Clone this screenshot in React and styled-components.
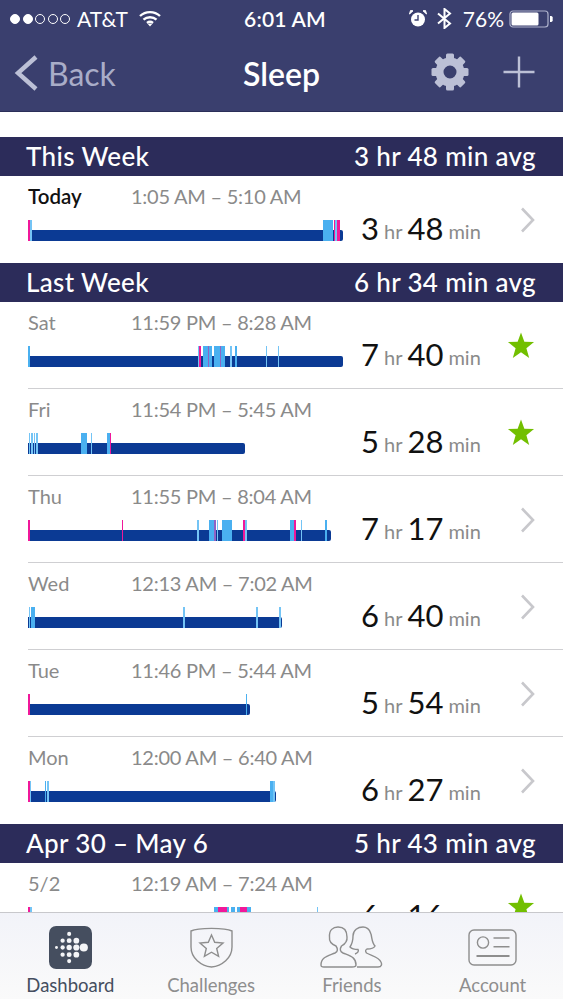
import React from 'react'
import styled, { createGlobalStyle } from 'styled-components'

const BLUE = '#4ab0f0'
const LIGHT = '#74c4f5'
const PINK = '#f0189a'
const PURPLE = '#8f63c4'

const GlobalStyle = createGlobalStyle`
  html, body {
    margin: 0;
    padding: 0;
    overflow: hidden;
    background: #fff;
  }
  * {
    box-sizing: border-box;
  }
`

const Screen = styled.div`
  display: flex;
  flex-direction: column;
  width: 563px;
  height: 999px;
  overflow: hidden;
  font-family: 'Lato', 'Liberation Sans', sans-serif;
`

const Header = styled.header`
  flex: none;
  height: 112px;
  background: #3a3f6e;
  border-bottom: 1px solid #2a2e58;
  color: #fff;
`

const StatusBar = styled.div`
  display: grid;
  grid-template-columns: 1fr auto 1fr;
  align-items: center;
  height: 37px;
  padding: 0 10px;
  font-size: 21px;
`

const StatusLeft = styled.div`
  display: flex;
  align-items: center;
`

const StatusRight = styled.div`
  display: flex;
  align-items: center;
  justify-content: flex-end;
`

const Signal = styled.div`
  display: flex;
  gap: 2.5px;
  margin-right: 7px;
`

const SignalDot = styled.span`
  width: 10px;
  height: 10px;
  border-radius: 50%;
  border: 1px solid #fff;
  background: ${(p) => (p.$on ? '#fff' : 'transparent')};
`

const Carrier = styled.span`
  margin-right: 11px;
`

const Clock = styled.span`
  padding-left: 7px;
  font-weight: 600;
  letter-spacing: 0.2px;
`

const AlarmSlot = styled.span`
  display: flex;
  margin-right: 10px;
`

const Percent = styled.span`
  margin: 0 5px 0 11px;
`

const NavBar = styled.div`
  display: grid;
  grid-template-columns: 1fr auto 1fr;
  align-items: center;
  height: 74px;
  padding: 0 14px 2px;
`

const BackLink = styled.div`
  display: flex;
  align-items: center;
  gap: 10px;
  color: #a9adc8;
  font-size: 32px;
`

const NavTitle = styled.div`
  font-size: 32px;
  font-weight: 600;
`

const NavActions = styled.div`
  display: flex;
  align-items: center;
  justify-content: flex-end;
  gap: 34px;
  padding: 0 14px 3px 0;
`

const Content = styled.main`
  flex: 1;
  min-height: 0;
  overflow: hidden;
  padding-top: 25px;
  background: #fff;
`

const SectionHead = styled.div`
  display: flex;
  align-items: center;
  justify-content: space-between;
  height: 39px;
  padding: 0 27px 1px 26px;
  background: #2c2c5a;
  color: #fff;
  font-size: 26px;
  font-weight: 500;
  letter-spacing: 0.35px;
`

const Row = styled.div`
  display: grid;
  grid-template-columns: 333px 1fr auto;
  height: 87px;
  padding: 0 28px;
  position: relative;
`

const Divider = styled.div`
  height: 1px;
  margin: -1px 0 0 28px;
  background: #cfcfd2;
  position: relative;
`

const RowMain = styled.div`
  display: flex;
  flex-direction: column;
  padding-top: 8px;
`

const RowLabels = styled.div`
  display: flex;
  height: 25px;
  line-height: 25px;
  font-size: 20px;
  letter-spacing: -0.25px;
  color: #8a8a8a;
`

const Day = styled.span`
  width: 103px;
  letter-spacing: 0;
  color: ${(p) => (p.$today ? '#111' : '#8a8a8a')};
  font-weight: ${(p) => (p.$today ? 600 : 400)};
  font-size: ${(p) => (p.$today ? '20.5px' : '20px')};
`

const Chart = styled.div`
  position: relative;
  height: 21px;
  margin-top: 11px;
`

const Bar = styled.div`
  position: absolute;
  left: 0;
  bottom: 0;
  height: 11px;
  background: #0b3a94;
  border-radius: 0 2px 2px 0;
`

const Mark = styled.span`
  position: absolute;
  top: 0;
  bottom: 0;
`

const Total = styled.div`
  padding-top: 32px;
  line-height: 40px;
  font-size: 20px;
  color: #8a8a8a;
  white-space: nowrap;
`

const Num = styled.span`
  font-size: 31px;
  color: #111;
  vertical-align: -1px;
`

const Unit = styled.span`
  margin: 0 5px;
`

const RowEnd = styled.div`
  display: flex;
  justify-content: flex-end;
  padding-top: 30px;
`

const TabBar = styled.nav`
  flex: none;
  display: grid;
  grid-template-columns: repeat(4, 1fr);
  height: 87px;
  border-top: 1px solid #c8c8cc;
  background: linear-gradient(#f2f3f9, #fafafa);
`

const Tab = styled.div`
  display: flex;
  flex-direction: column;
  align-items: center;
  padding-top: 12px;
  color: ${(p) => (p.$active ? '#454e5f' : '#8e8e8e')};
  font-size: 18.5px;
`

const TabIcon = styled.div`
  display: flex;
  align-items: center;
  justify-content: center;
  height: 44px;
  margin-bottom: 5px;
`

const rows = {
  today: [
    [0, 2.3, PINK], [2.3, 4, LIGHT], [294.7, 305.3, BLUE], [305.7, 307.3, PINK],
    [307.3, 309, LIGHT], [309, 312.3, PINK],
  ],
  sat: [
    [0, 1.7, BLUE], [170.3, 172, LIGHT], [171.3, 173.3, PINK], [174.7, 184.3, BLUE],
    [179.7, 181.3, PURPLE], [186.3, 197, BLUE], [191.7, 193, PURPLE], [202, 203.7, LIGHT],
    [207, 209, BLUE], [237.7, 238.7, LIGHT], [250, 250.7, LIGHT],
  ],
  fri: [
    [0.7, 2, LIGHT], [2.7, 3.7, LIGHT], [4.3, 5.3, LIGHT], [6, 7, LIGHT], [8, 10, LIGHT],
    [53.3, 59, BLUE], [62.7, 64, LIGHT], [79, 82, BLUE], [82, 83.3, PINK],
  ],
  thu: [
    [0, 1.5, PINK], [94, 95.3, PINK], [169.3, 171, LIGHT], [180.7, 187, BLUE],
    [186.3, 187.7, PURPLE], [188.7, 190, LIGHT], [193.7, 204.3, BLUE], [215.3, 217, PINK],
    [217, 219, LIGHT], [262.3, 266.3, BLUE], [266.3, 268, PINK], [273.3, 274.3, LIGHT],
    [297.3, 299, BLUE],
  ],
  wed: [
    [0.7, 2, LIGHT], [3, 7, BLUE], [155, 156.7, LIGHT], [228.3, 229.7, LIGHT], [251.3, 253.3, LIGHT],
  ],
  tue: [[0, 2, PINK], [218, 219.3, BLUE]],
  mon: [
    [0, 2, PINK], [2, 3, LIGHT], [17, 18, BLUE], [18.7, 21, LIGHT], [242, 245, BLUE], [245, 246.7, LIGHT],
  ],
  may2: [
    [0, 2, PINK], [2, 4, LIGHT], [186, 190.3, BLUE], [190.3, 198.7, PINK], [198.7, 201, BLUE],
    [202.7, 207, BLUE], [208.7, 212, BLUE], [212, 218.7, PINK], [218.7, 223, BLUE], [289, 290, LIGHT],
  ],
}

const Chevron = () => (
  <svg width="15" height="28" viewBox="0 0 15 28" fill="none" stroke="#c8c8cc" strokeWidth="2.6">
    <path d="M2 2.5 L13 14 L2 25.5" />
  </svg>
)

const Star = () => (
  <svg width="28" height="27" viewBox="0 0 30 29" fill="#72bf00">
    <path d="M15 0.5 L18.6 10.6 L29 10.8 L20.8 17.4 L23.8 28 L15 21.8 L6.2 28 L9.2 17.4 L1 10.8 L11.4 10.6 Z" />
  </svg>
)

const SleepRow = ({ day, today, time, width, marks, hr, min, star }) => (
  <Row>
    <RowMain>
      <RowLabels>
        <Day $today={today}>{day}</Day>
        <span>{time}</span>
      </RowLabels>
      <Chart>
        <Bar style={{ width }} />
        {marks.map(([from, to, color]) => (
          <Mark key={from} style={{ left: from, width: to - from, background: color }} />
        ))}
      </Chart>
    </RowMain>
    <Total>
      <Num>{hr}</Num>
      <Unit>hr</Unit>
      <Num>{min}</Num>
      <Unit>min</Unit>
    </Total>
    <RowEnd>{star ? <Star /> : <Chevron />}</RowEnd>
  </Row>
)

const Wifi = () => (
  <svg width="22" height="17" viewBox="0 0 22 17" fill="none" stroke="#fff" strokeWidth="2.4">
    <path d="M1 6 C6.5 0.8 15.5 0.8 21 6" />
    <path d="M4.5 9.6 C8 6.4 14 6.4 17.5 9.6" />
    <path d="M8 13 C9.8 11.6 12.2 11.6 14 13" />
    <path d="M11 16.5 L8.8 14 C10 13.2 12 13.2 13.2 14 Z" fill="#fff" stroke="none" />
  </svg>
)

const Alarm = () => (
  <svg width="18" height="17" viewBox="0 0 18 17">
    <circle cx="9" cy="9.5" r="7" fill="#fff" />
    <path d="M9 5 V10 H5.5" fill="none" stroke="#3a3f6e" strokeWidth="1.4" />
    <path d="M0.5 4 L4 0.8 L1.5 0.6 Z M17.5 4 L14 0.8 L16.5 0.6 Z" fill="#fff" stroke="#fff" />
  </svg>
)

const Bluetooth = () => (
  <svg width="15" height="21" viewBox="0 0 15 21" fill="none" stroke="#fff" strokeWidth="2">
    <path d="M1 5.5 L13 15.5 L7.5 20 V1 L13 5.5 L1 15.5" />
  </svg>
)

const Battery = () => (
  <svg width="44" height="18" viewBox="0 0 44 18">
    <rect x="1" y="1" width="38" height="16" rx="3" fill="none" stroke="#aeb2cc" strokeWidth="1.2" />
    <rect x="2.5" y="2.5" width="27" height="13" rx="1.5" fill="#fff" />
    <path d="M41 6 H42 A2 2 0 0 1 43.5 9 A2 2 0 0 1 42 12 H41 Z" fill="#fff" />
  </svg>
)

const BackArrow = () => (
  <svg width="24" height="36" viewBox="0 0 24 36" fill="none" stroke="#bcc0d6" strokeWidth="4.4">
    <path d="M22 2 L4 18 L22 34" />
  </svg>
)

const GEAR_TEETH = [0, 45, 90, 135, 180, 225, 270, 315]

const Gear = () => (
  <svg width="38" height="38" viewBox="0 0 38 38" fill="#bcc0d6">
    <circle cx="19" cy="19" r="10.5" fill="none" stroke="#bcc0d6" strokeWidth="8" />
    {GEAR_TEETH.map((deg) => (
      <rect key={deg} x="15" y="0.5" width="8" height="7" rx="1.5" transform={`rotate(${deg} 19 19)`} />
    ))}
  </svg>
)

const Plus = () => (
  <svg width="32" height="32" viewBox="0 0 32 32" stroke="#bcc0d6" strokeWidth="2.4">
    <path d="M16 0.5 V31.5 M0.5 16 H31.5" />
  </svg>
)

const FITBIT_DOTS = [
  [19.7, 7.7, 2], [13.3, 14.3, 2.1], [19.7, 14.3, 2.4], [26.7, 14.3, 2.8],
  [7.3, 21, 1.4], [13.3, 21, 2.1], [19.7, 21, 2.6], [26.7, 21, 3], [34, 21, 4],
  [13.3, 28, 2.1], [19.7, 28, 2.4], [26.7, 28, 2.8], [19.7, 34.3, 2],
]

const FitbitIcon = () => (
  <svg width="43" height="43" viewBox="0 0 42 42">
    <rect width="42" height="42" rx="7" fill="#454e5f" />
    {FITBIT_DOTS.map(([cx, cy, r]) => (
      <circle key={`${cx}-${cy}`} cx={cx} cy={cy} r={r} fill="#f4f5f7" />
    ))}
  </svg>
)

const ShieldIcon = () => (
  <svg width="43" height="42" viewBox="0 0 43 42" fill="none" stroke="#8e8e8e" strokeWidth="1.4">
    <path d="M1 5 C8 1.5 35 1.5 42 5 V21 C42 32 32 40 21.5 41 C11 40 1 32 1 21 Z" />
    <path d="M21.5 9 L24.7 16.3 L33 17 L26.7 22.4 L28.6 30.4 L21.5 26.2 L14.4 30.4 L16.3 22.4 L10 17 L18.3 16.3 Z" />
  </svg>
)

const FriendsIcon = () => (
  <svg width="63" height="42" viewBox="0 0 63 42" fill="none" stroke="#8e8e8e" strokeWidth="1.4">
    <path d="M1 39 C1 31 8 30 15 27 C18 25.5 18 23 16 20 C11 18 9 15 9.5 11 C9 4 13 1 18 1 C24 1 27 5 27 11 C27.5 15 25 18 21.5 20 C19.5 23 20 25.5 23 27 C30 30 36 31 36 39 C36 41 34 41 32 41 H4 C2 41 1 41 1 39 Z" />
    <path d="M37 41 H58 C62 41 62 38 61 36 C59 31 52 30 46.5 27 C45 25 45.5 24 47 23 C51 23 54 22 55 20 C52 17 52 12 51 8 C50 3 46 1 43 1 C38 1 33 4 33 10 C33 14 32 18 30 21 C32 23 35 23.5 38 23.5 C39 25 38 27 35 28" />
  </svg>
)

const AccountIcon = () => (
  <svg width="49" height="37" viewBox="0 0 49 37" fill="none" stroke="#8e8e8e" strokeWidth="1.4">
    <rect x="1" y="1" width="47" height="35" rx="5" />
    <circle cx="15" cy="13.5" r="5.6" />
    <path d="M25.5 9 H41.5 M25.5 17.7 H41.5" />
    <path d="M8.5 27 H41.5" strokeWidth="1.8" />
  </svg>
)

const App = () => (
  <Screen>
    <GlobalStyle />
    <Header>
      <StatusBar>
        <StatusLeft>
          <Signal>
            <SignalDot $on />
            <SignalDot $on />
            <SignalDot />
            <SignalDot />
            <SignalDot />
          </Signal>
          <Carrier>AT&amp;T</Carrier>
          <Wifi />
        </StatusLeft>
        <Clock>6:01 AM</Clock>
        <StatusRight>
          <AlarmSlot><Alarm /></AlarmSlot>
          <Bluetooth />
          <Percent>76%</Percent>
          <Battery />
        </StatusRight>
      </StatusBar>
      <NavBar>
        <BackLink>
          <BackArrow />
          Back
        </BackLink>
        <NavTitle>Sleep</NavTitle>
        <NavActions>
          <Gear />
          <Plus />
        </NavActions>
      </NavBar>
    </Header>
    <Content>
      <SectionHead>
        <span>This Week</span>
        <span>3 hr 48 min avg</span>
      </SectionHead>
      <SleepRow day="Today" today time="1:05 AM – 5:10 AM" width={315} marks={rows.today} hr="3" min="48" />
      <SectionHead>
        <span>Last Week</span>
        <span>6 hr 34 min avg</span>
      </SectionHead>
      <SleepRow day="Sat" time="11:59 PM – 8:28 AM" width={315} marks={rows.sat} hr="7" min="40" star />
      <Divider />
      <SleepRow day="Fri" time="11:54 PM – 5:45 AM" width={217} marks={rows.fri} hr="5" min="28" star />
      <Divider />
      <SleepRow day="Thu" time="11:55 PM – 8:04 AM" width={303} marks={rows.thu} hr="7" min="17" />
      <Divider />
      <SleepRow day="Wed" time="12:13 AM – 7:02 AM" width={253.5} marks={rows.wed} hr="6" min="40" />
      <Divider />
      <SleepRow day="Tue" time="11:46 PM – 5:44 AM" width={221.7} marks={rows.tue} hr="5" min="54" />
      <Divider />
      <SleepRow day="Mon" time="12:00 AM – 6:40 AM" width={248} marks={rows.mon} hr="6" min="27" />
      <SectionHead>
        <span>Apr 30 – May 6</span>
        <span>5 hr 43 min avg</span>
      </SectionHead>
      <SleepRow day="5/2" time="12:19 AM – 7:24 AM" width={300} marks={rows.may2} hr="6" min="16" star />
    </Content>
    <TabBar>
      <Tab $active>
        <TabIcon><FitbitIcon /></TabIcon>
        Dashboard
      </Tab>
      <Tab>
        <TabIcon><ShieldIcon /></TabIcon>
        Challenges
      </Tab>
      <Tab>
        <TabIcon><FriendsIcon /></TabIcon>
        Friends
      </Tab>
      <Tab>
        <TabIcon><AccountIcon /></TabIcon>
        Account
      </Tab>
    </TabBar>
  </Screen>
)

export default App
